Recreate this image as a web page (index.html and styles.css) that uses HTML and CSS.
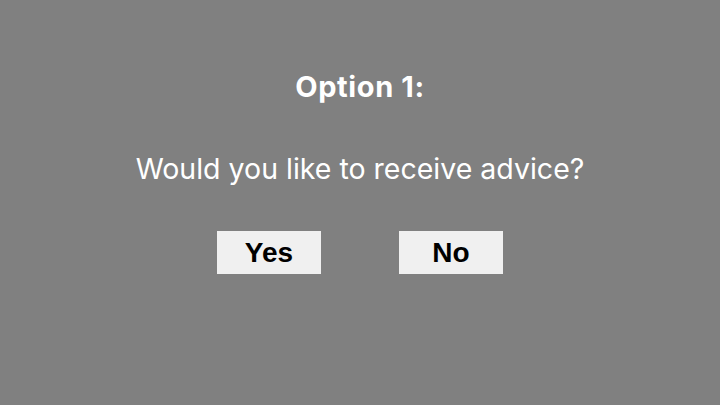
FILE: index.html
```html
<!DOCTYPE html>
<html>
<head>
<meta charset="utf-8">
<link rel="stylesheet" href="styles.css">
</head>
<body>
<main class="slide">
  <h1 class="title">Option 1:</h1>
  <p class="question">Would you like to receive advice?</p>
  <div class="choices">
    <button class="choice">Yes</button>
    <button class="choice">No</button>
  </div>
</main>
</body>
</html>
```

FILE: styles.css
```css
html, body {
  margin: 0;
  padding: 0;
  background: #808080;
}
.slide {
  width: 720px;
  height: 405px;
  display: flex;
  flex-direction: column;
  align-items: center;
  padding-top: 67px;
  box-sizing: border-box;
  font-family: Inter, "Open Sans", sans-serif;
  color: #ffffff;
}
.title {
  margin: 0;
  font-size: 29px;
  font-weight: 700;
  letter-spacing: 0.6px;
  line-height: 40px;
}
.question {
  margin: 42px 0 0;
  font-size: 28.5px;
  font-weight: 400;
  line-height: 40px;
}
.choices {
  display: flex;
  gap: 78px;
  margin-top: 42px;
}
.choice {
  width: 104px;
  height: 43px;
  border: none;
  background: #f0f0f0;
  color: #000;
  font-family: "Liberation Sans", Arial, sans-serif;
  font-weight: 700;
  font-size: 28px;
  padding: 0;
}
```
